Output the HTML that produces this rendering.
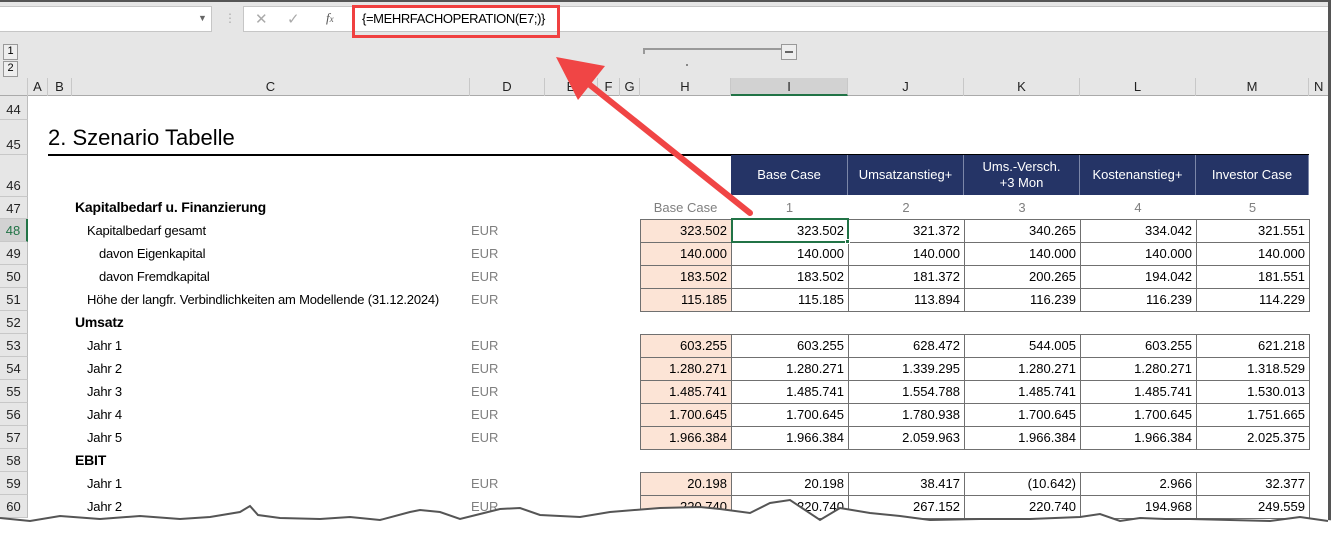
<!DOCTYPE html>
<html><head><meta charset="utf-8"><style>
*{margin:0;padding:0;box-sizing:border-box}
body{width:1337px;height:541px;background:#fff;position:relative;overflow:hidden;font-family:"Liberation Sans",Arial,sans-serif;font-size:13px;color:#000}
.a{position:absolute}
.rn{position:absolute;left:0;width:28px;background:#e6e6e6;border-bottom:1px solid #c8c8c8;border-right:1px solid #bdbdbd;text-align:center;font-size:13px;color:#222}
.ch{position:absolute;top:78px;height:18px;border-right:1px solid #c8c8c8;text-align:center;font-size:13px;line-height:18px;color:#222}
.lb{position:absolute;height:23px;line-height:23px;white-space:nowrap;letter-spacing:-0.2px}
.eur{position:absolute;left:471px;color:#7f7f7f;height:23px;line-height:23px}
.c{position:absolute;height:24px;line-height:22px;text-align:right;padding-right:4px;border:1px solid #707070;font-size:13px}
.p{background:#fce4d6}
.hd{position:absolute;top:155px;height:40px;background:#253466;color:#fff;text-align:center;display:flex;align-items:center;justify-content:center;line-height:16px;border-right:1px solid #7b86a8}
.n{position:absolute;top:197px;height:22px;line-height:22px;text-align:center;color:#7f7f7f}
</style></head><body>
<div class="a" style="left:0;top:0;width:1330px;height:78px;background:#e6e6e6"></div>
<div class="a" style="left:0;top:0;width:1330px;height:2px;background:#555"></div>
<div class="a" style="left:0;top:6px;width:212px;height:26px;background:#fff;border:1px solid #c6c6c6;border-left:none"></div>
<div class="a" style="left:198px;top:13px;font-size:9px;color:#666">▼</div>
<div class="a" style="left:224px;top:11px;color:#aaa;font-size:12px">⋮</div>
<div class="a" style="left:243px;top:6px;width:1087px;height:26px;background:#fff;border:1px solid #c6c6c6"></div>
<div class="a" style="left:255px;top:10px;color:#aaa;font-size:15px">✕</div>
<div class="a" style="left:287px;top:10px;color:#aaa;font-size:15px">✓</div>
<div class="a" style="left:326px;top:10px;color:#555;font-size:13px;font-style:italic;font-family:'Liberation Serif',serif">f<span style="font-size:9px">x</span></div>
<div class="a" style="left:352px;top:5px;width:208px;height:33px;border:3px solid #f04040"></div>
<div class="a" style="left:362px;top:11px;font-size:13px;letter-spacing:-0.4px">{=MEHRFACHOPERATION(E7;)}</div>
<div class="a" style="left:3px;top:44px;width:15px;height:16px;border:1px solid #999;font-size:11px;text-align:center;background:#eee">1</div>
<div class="a" style="left:3px;top:61px;width:15px;height:16px;border:1px solid #999;font-size:11px;text-align:center;background:#eee">2</div>
<div class="a" style="left:643px;top:48px;width:140px;height:2px;background:#999"></div>
<div class="a" style="left:643px;top:48px;width:2px;height:6px;background:#999"></div>
<div class="a" style="left:781px;top:44px;width:16px;height:16px;border:1px solid #999;background:#eee"></div>
<div class="a" style="left:785px;top:51px;width:8px;height:2px;background:#666"></div>
<div class="a" style="left:686px;top:64px;width:2px;height:2px;background:#888"></div>
<div class="a" style="left:0;top:78px;width:1330px;height:18px;background:#e6e6e6;border-bottom:1px solid #aaa"></div>
<div class="ch" style="left:0;width:28px"></div>
<div class="ch" style="left:28px;width:20px">A</div>
<div class="ch" style="left:48px;width:24px">B</div>
<div class="ch" style="left:72px;width:398px">C</div>
<div class="ch" style="left:470px;width:75px">D</div>
<div class="ch" style="left:545px;width:53px">E</div>
<div class="ch" style="left:598px;width:22px">F</div>
<div class="ch" style="left:620px;width:20px">G</div>
<div class="ch" style="left:640px;width:91px">H</div>
<div class="ch" style="left:731px;width:117px;background:#d2d2d2;border-bottom:2px solid #217346">I</div>
<div class="ch" style="left:848px;width:116px">J</div>
<div class="ch" style="left:964px;width:116px">K</div>
<div class="ch" style="left:1080px;width:116px">L</div>
<div class="ch" style="left:1196px;width:113px">M</div>
<div class="ch" style="left:1309px;width:21px;text-align:left;padding-left:5px">N</div>
<div class="a" style="left:1328px;top:0;width:3px;height:541px;background:#555"></div>
<div class="a" style="left:1331px;top:0;width:6px;height:541px;background:#fff"></div>
<div class="rn" style="top:96px;height:24px;line-height:28px">44</div>
<div class="rn" style="top:120px;height:35px;line-height:50px">45</div>
<div class="rn" style="top:155px;height:42px;line-height:62px">46</div>
<div class="rn" style="top:197px;height:22px;line-height:24px">47</div>
<div class="rn" style="top:219px;height:23px;line-height:24px;background:#d2d2d2;color:#217346;border-right:2px solid #217346">48</div>
<div class="rn" style="top:242px;height:23px;line-height:24px">49</div>
<div class="rn" style="top:265px;height:23px;line-height:24px">50</div>
<div class="rn" style="top:288px;height:23px;line-height:24px">51</div>
<div class="rn" style="top:311px;height:23px;line-height:24px">52</div>
<div class="rn" style="top:334px;height:23px;line-height:24px">53</div>
<div class="rn" style="top:357px;height:23px;line-height:24px">54</div>
<div class="rn" style="top:380px;height:23px;line-height:24px">55</div>
<div class="rn" style="top:403px;height:23px;line-height:24px">56</div>
<div class="rn" style="top:426px;height:23px;line-height:24px">57</div>
<div class="rn" style="top:449px;height:23px;line-height:24px">58</div>
<div class="rn" style="top:472px;height:23px;line-height:24px">59</div>
<div class="rn" style="top:495px;height:23px;line-height:24px">60</div>
<div class="a" style="left:48px;top:125px;font-size:22px">2. Szenario Tabelle</div>
<div class="a" style="left:48px;top:154px;width:683px;height:2px;background:#000"></div>
<div class="a" style="left:731px;top:154px;width:578px;height:2px;background:#000"></div>
<div class="hd" style="left:731px;width:117px">Base Case</div>
<div class="hd" style="left:848px;width:116px">Umsatzanstieg+</div>
<div class="hd" style="left:964px;width:116px">Ums.-Versch.<br>+3 Mon</div>
<div class="hd" style="left:1080px;width:116px">Kostenanstieg+</div>
<div class="hd" style="left:1196px;width:113px">Investor Case</div>
<div class="n" style="left:640px;width:91px">Base Case</div>
<div class="n" style="left:731px;width:117px">1</div>
<div class="n" style="left:848px;width:116px">2</div>
<div class="n" style="left:964px;width:116px">3</div>
<div class="n" style="left:1080px;width:116px">4</div>
<div class="n" style="left:1196px;width:113px">5</div>
<div class="lb" style="left:75px;top:196px;font-weight:bold;font-size:14px">Kapitalbedarf u. Finanzierung</div>
<div class="lb" style="left:87px;top:219px">Kapitalbedarf gesamt</div><div class="eur" style="top:219px">EUR</div>
<div class="lb" style="left:99px;top:242px">davon Eigenkapital</div><div class="eur" style="top:242px">EUR</div>
<div class="lb" style="left:99px;top:265px">davon Fremdkapital</div><div class="eur" style="top:265px">EUR</div>
<div class="lb" style="left:87px;top:288px">Höhe der langfr. Verbindlichkeiten am Modellende (31.12.2024)</div><div class="eur" style="top:288px">EUR</div>
<div class="lb" style="left:75px;top:311px;font-weight:bold;font-size:14px">Umsatz</div>
<div class="lb" style="left:87px;top:334px">Jahr 1</div><div class="eur" style="top:334px">EUR</div>
<div class="lb" style="left:87px;top:357px">Jahr 2</div><div class="eur" style="top:357px">EUR</div>
<div class="lb" style="left:87px;top:380px">Jahr 3</div><div class="eur" style="top:380px">EUR</div>
<div class="lb" style="left:87px;top:403px">Jahr 4</div><div class="eur" style="top:403px">EUR</div>
<div class="lb" style="left:87px;top:426px">Jahr 5</div><div class="eur" style="top:426px">EUR</div>
<div class="lb" style="left:75px;top:449px;font-weight:bold;font-size:14px">EBIT</div>
<div class="lb" style="left:87px;top:472px">Jahr 1</div><div class="eur" style="top:472px">EUR</div>
<div class="lb" style="left:87px;top:495px">Jahr 2</div><div class="eur" style="top:495px">EUR</div>
<div class="c p" style="left:640px;top:219px;width:92px">323.502</div><div class="c" style="left:731px;top:219px;width:118px">323.502</div><div class="c" style="left:848px;top:219px;width:117px">321.372</div><div class="c" style="left:964px;top:219px;width:117px">340.265</div><div class="c" style="left:1080px;top:219px;width:117px">334.042</div><div class="c" style="left:1196px;top:219px;width:114px">321.551</div>
<div class="c p" style="left:640px;top:242px;width:92px">140.000</div><div class="c" style="left:731px;top:242px;width:118px">140.000</div><div class="c" style="left:848px;top:242px;width:117px">140.000</div><div class="c" style="left:964px;top:242px;width:117px">140.000</div><div class="c" style="left:1080px;top:242px;width:117px">140.000</div><div class="c" style="left:1196px;top:242px;width:114px">140.000</div>
<div class="c p" style="left:640px;top:265px;width:92px">183.502</div><div class="c" style="left:731px;top:265px;width:118px">183.502</div><div class="c" style="left:848px;top:265px;width:117px">181.372</div><div class="c" style="left:964px;top:265px;width:117px">200.265</div><div class="c" style="left:1080px;top:265px;width:117px">194.042</div><div class="c" style="left:1196px;top:265px;width:114px">181.551</div>
<div class="c p" style="left:640px;top:288px;width:92px">115.185</div><div class="c" style="left:731px;top:288px;width:118px">115.185</div><div class="c" style="left:848px;top:288px;width:117px">113.894</div><div class="c" style="left:964px;top:288px;width:117px">116.239</div><div class="c" style="left:1080px;top:288px;width:117px">116.239</div><div class="c" style="left:1196px;top:288px;width:114px">114.229</div>
<div class="c p" style="left:640px;top:334px;width:92px">603.255</div><div class="c" style="left:731px;top:334px;width:118px">603.255</div><div class="c" style="left:848px;top:334px;width:117px">628.472</div><div class="c" style="left:964px;top:334px;width:117px">544.005</div><div class="c" style="left:1080px;top:334px;width:117px">603.255</div><div class="c" style="left:1196px;top:334px;width:114px">621.218</div>
<div class="c p" style="left:640px;top:357px;width:92px">1.280.271</div><div class="c" style="left:731px;top:357px;width:118px">1.280.271</div><div class="c" style="left:848px;top:357px;width:117px">1.339.295</div><div class="c" style="left:964px;top:357px;width:117px">1.280.271</div><div class="c" style="left:1080px;top:357px;width:117px">1.280.271</div><div class="c" style="left:1196px;top:357px;width:114px">1.318.529</div>
<div class="c p" style="left:640px;top:380px;width:92px">1.485.741</div><div class="c" style="left:731px;top:380px;width:118px">1.485.741</div><div class="c" style="left:848px;top:380px;width:117px">1.554.788</div><div class="c" style="left:964px;top:380px;width:117px">1.485.741</div><div class="c" style="left:1080px;top:380px;width:117px">1.485.741</div><div class="c" style="left:1196px;top:380px;width:114px">1.530.013</div>
<div class="c p" style="left:640px;top:403px;width:92px">1.700.645</div><div class="c" style="left:731px;top:403px;width:118px">1.700.645</div><div class="c" style="left:848px;top:403px;width:117px">1.780.938</div><div class="c" style="left:964px;top:403px;width:117px">1.700.645</div><div class="c" style="left:1080px;top:403px;width:117px">1.700.645</div><div class="c" style="left:1196px;top:403px;width:114px">1.751.665</div>
<div class="c p" style="left:640px;top:426px;width:92px">1.966.384</div><div class="c" style="left:731px;top:426px;width:118px">1.966.384</div><div class="c" style="left:848px;top:426px;width:117px">2.059.963</div><div class="c" style="left:964px;top:426px;width:117px">1.966.384</div><div class="c" style="left:1080px;top:426px;width:117px">1.966.384</div><div class="c" style="left:1196px;top:426px;width:114px">2.025.375</div>
<div class="c p" style="left:640px;top:472px;width:92px">20.198</div><div class="c" style="left:731px;top:472px;width:118px">20.198</div><div class="c" style="left:848px;top:472px;width:117px">38.417</div><div class="c" style="left:964px;top:472px;width:117px">(10.642)</div><div class="c" style="left:1080px;top:472px;width:117px">2.966</div><div class="c" style="left:1196px;top:472px;width:114px">32.377</div>
<div class="c p" style="left:640px;top:495px;width:92px">220.740</div><div class="c" style="left:731px;top:495px;width:118px">220.740</div><div class="c" style="left:848px;top:495px;width:117px">267.152</div><div class="c" style="left:964px;top:495px;width:117px">220.740</div><div class="c" style="left:1080px;top:495px;width:117px">194.968</div><div class="c" style="left:1196px;top:495px;width:114px">249.559</div>
<div class="a" style="left:731px;top:218px;width:118px;height:25px;border:2px solid #217346"></div>
<div class="a" style="left:845px;top:239px;width:5px;height:5px;background:#217346;border:1px solid #fff"></div>
<svg class="a" style="left:0;top:0" width="1337" height="541">
<line x1="750" y1="213" x2="585" y2="81" stroke="#f04545" stroke-width="6" stroke-linecap="round"/>
<polygon points="556,57 605,66 578,100" fill="#f04545"/>
<polygon points="0,518 30,521 60,516 100,519 140,516 180,519 210,517 240,512 250,506 258,515 280,518 320,519 350,517 380,520 410,512 420,510 440,512 460,519 480,514 500,509 520,508 540,515 580,517 610,512 660,508 700,507 720,509 750,513 770,503 790,500 820,520 840,508 870,513 900,516 930,520 980,519 1030,519 1080,517 1100,514 1120,521 1140,518 1165,519 1190,519 1230,520 1270,521 1300,517 1337,521 1337,545 0,545" fill="#fff"/>
<polyline points="0,518 30,521 60,516 100,519 140,516 180,519 210,517 240,512 250,506 258,515 280,518 320,519 350,517 380,520 410,512 420,510 440,512 460,519 480,514 500,509 520,508 540,515 580,517 610,512 660,508 700,507 720,509 750,513 770,503 790,500 820,520 840,508 870,513 900,516 930,520 980,519 1030,519 1080,517 1100,514 1120,521 1140,518 1165,519 1190,519 1230,520 1270,521 1300,517 1328,521" fill="none" stroke="#555" stroke-width="2"/>
</svg>
</body></html>
